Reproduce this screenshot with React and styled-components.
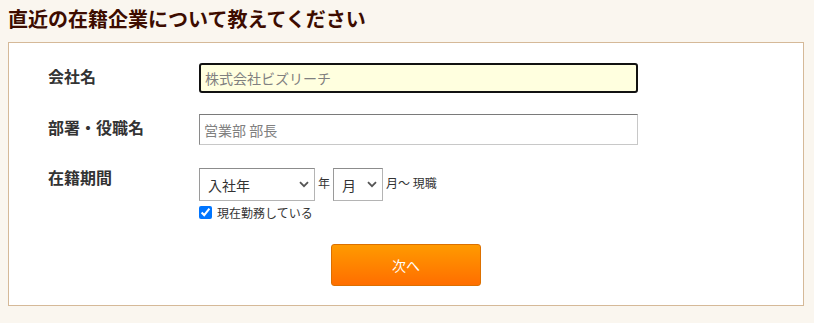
import React from "react";
import styled, { createGlobalStyle } from "styled-components";

const GlobalStyle = createGlobalStyle`
  body {
    margin: 0;
    background: #faf6ef;
    font-family: "Noto Sans CJK JP", "Noto Sans", sans-serif;
    color: #333;
  }
`;

const Page = styled.div`
  padding: 0 10px 0 8px;
`;

const Heading = styled.h2`
  margin: 6px 0 10px;
  font-size: 20px;
  line-height: 26px;
  font-weight: 700;
  color: #3d0c00;
`;

const Panel = styled.section`
  background: #fff;
  border: 1px solid #d5b998;
  padding: 20px 39px 19px;
`;

const Row = styled.div`
  display: grid;
  grid-template-columns: 151px 1fr;
  margin-bottom: ${(p) => p.$gap || 0}px;
`;

const Label = styled.div`
  font-size: 16px;
  font-weight: 700;
  line-height: 24px;
  color: #333;
  margin-top: ${(p) => p.$offset || 0}px;
`;

const TextInput = styled.input`
  box-sizing: border-box;
  width: 439px;
  height: ${(p) => (p.$focused ? 30 : 31)}px;
  padding: 0 4px;
  font-family: inherit;
  font-size: 14px;
  color: #333;
  outline: none;
  border: ${(p) => (p.$focused ? "2px solid #111" : "1px solid #c8c8c8")};
  border-top-color: ${(p) => (p.$focused ? "#111" : "#7a7a7a")};
  border-left-color: ${(p) => (p.$focused ? "#111" : "#8a8a8a")};
  border-radius: ${(p) => (p.$focused ? 3 : 0)}px;
  background: ${(p) => (p.$focused ? "#ffffdf" : "#fff")};
  &::placeholder {
    color: #808080;
  }
`;

const DateLine = styled.div`
  display: flex;
  align-items: flex-start;
  gap: 3px;
`;

const SelectWrap = styled.div`
  position: relative;
  width: ${(p) => p.$width}px;
  height: 33px;
`;

const Select = styled.select`
  appearance: none;
  box-sizing: border-box;
  width: 100%;
  height: 100%;
  padding: 0 20px 0 8px;
  font-family: inherit;
  font-size: 14px;
  color: #333;
  background: #fff;
  border: 1px solid #b4b4b4;
  border-top-color: #8c8c8c;
  border-left-color: #9a9a9a;
  border-radius: 0;
  outline: none;
`;

const Chevron = styled.svg`
  position: absolute;
  right: 6px;
  top: 13px;
  pointer-events: none;
`;

const Unit = styled.span`
  font-size: 12px;
  line-height: 18px;
  padding-top: 6px;
  color: #333;
`;

const CheckRow = styled.label`
  display: flex;
  align-items: center;
  gap: 5px;
  height: 14px;
  margin-top: 4px;
  font-size: 12px;
  color: #333;
`;

const Check = styled.input`
  margin: 0;
  width: 13px;
  height: 13px;
  accent-color: #0075ff;
`;

const Actions = styled.div`
  display: flex;
  justify-content: center;
  margin-top: 25px;
`;

const NextButton = styled.button`
  width: 150px;
  height: 42px;
  border: 1px solid #dc7000;
  border-radius: 3px;
  background: linear-gradient(#ff9a00, #ff6e00);
  color: #fff;
  font-family: inherit;
  font-size: 14px;
  cursor: pointer;
`;

const ChevronIcon = () => (
  <Chevron width="10" height="7" viewBox="0 0 10 7">
    <path d="M1 1.2l4 4 4-4" fill="none" stroke="#555" strokeWidth="1.8" />
  </Chevron>
);

const App = () => {
  return (
    <>
      <GlobalStyle />
      <Page>
        <Heading>直近の在籍企業について教えてください</Heading>
        <Panel>
          <Row $gap={21}>
            <Label $offset={1}>会社名</Label>
            <TextInput $focused placeholder="株式会社ビズリーチ" />
          </Row>
          <Row $gap={23}>
            <Label $offset={1}>部署・役職名</Label>
            <TextInput placeholder="営業部 部長" />
          </Row>
          <Row>
            <Label $offset={-3}>在籍期間</Label>
            <div>
              <DateLine>
                <SelectWrap $width={116}>
                  <Select defaultValue="">
                    <option value="">入社年</option>
                  </Select>
                  <ChevronIcon />
                </SelectWrap>
                <Unit>年</Unit>
                <SelectWrap $width={50}>
                  <Select defaultValue="">
                    <option value="">月</option>
                  </Select>
                  <ChevronIcon />
                </SelectWrap>
                <Unit>月～ 現職</Unit>
              </DateLine>
              <CheckRow>
                <Check type="checkbox" defaultChecked />
                現在勤務している
              </CheckRow>
            </div>
          </Row>
          <Actions>
            <NextButton type="button">次へ</NextButton>
          </Actions>
        </Panel>
      </Page>
    </>
  );
};

export default App;
